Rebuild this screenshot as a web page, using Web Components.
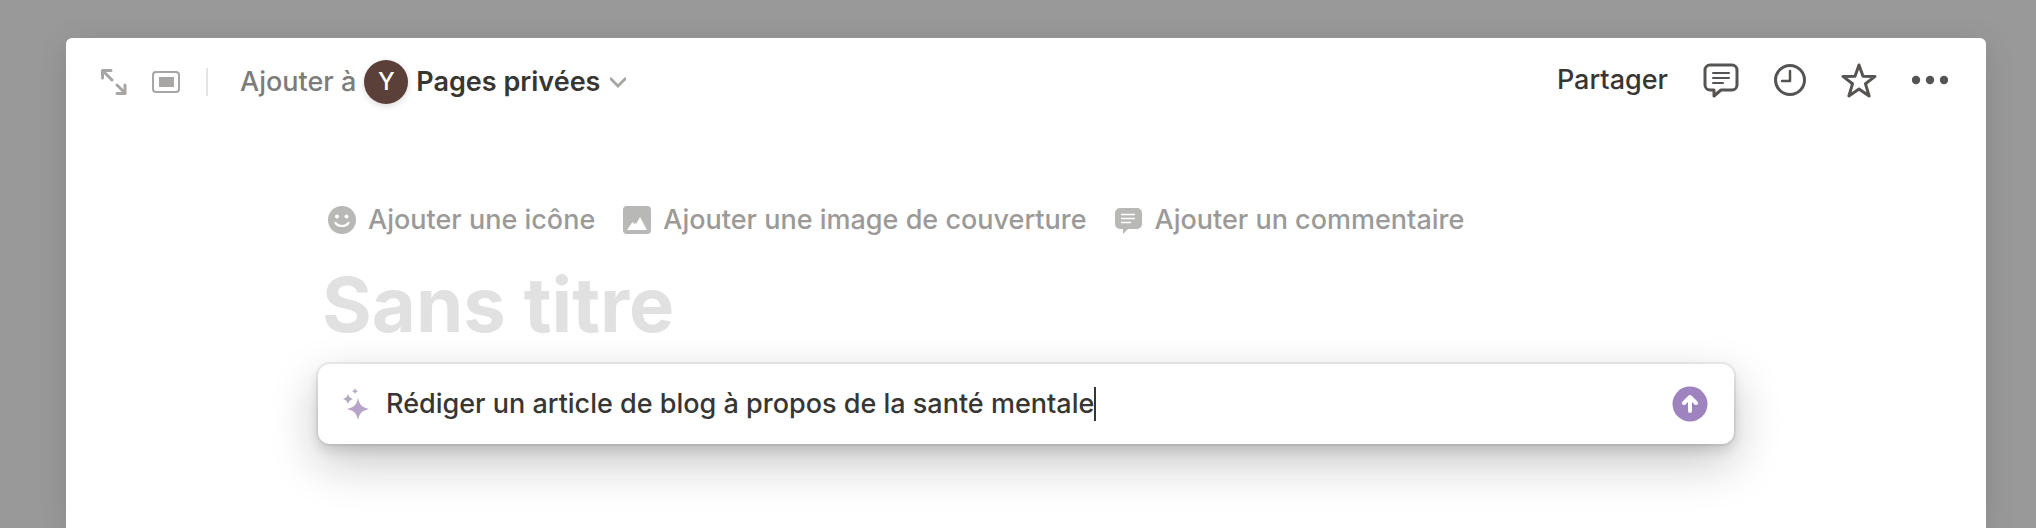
<!DOCTYPE html>
<html lang="fr">
<head>
<meta charset="utf-8">
<meta name="viewport" content="width=device-width, initial-scale=1">
<title>Sans titre</title>
<style>
  :root {
    --fg: #373633;
    --fg-medium: #555452;
    --fg-muted: #7d7c7a;
    --fg-light: #9b9a98;
    --icon-light: #b8b8b6;
    --icon-muted: #a7a6a4;
    --placeholder: #e1e1e1;
    --divider: #e3e3e2;
    --accent: #9f83bf;
    --size-body: 27px;
    --size-title: 76px;
  }
  body {
    margin: 0;
    min-height: 100vh;
    display: flex;
    background: #999;
    font-family: Inter, "Liberation Sans", sans-serif;
    font-size: var(--size-body);
    font-weight: 450;
    line-height: 36px;
    color: var(--fg);
  }
</style>
</head>
<body>
<page-peek>
  <peek-toolbar slot="toolbar">
    <icon-button name="expand" label="Ouvrir en pleine page"></icon-button>
    <icon-button name="peek" label="Changer de vue"></icon-button>
    <page-location slot="location" initial="Y" label="Ajouter à">Pages privées</page-location>
    <icon-button slot="actions" name="comment" label="Commentaires"></icon-button>
    <icon-button slot="actions" name="clock" label="Historique"></icon-button>
    <icon-button slot="actions" name="star" label="Favoris"></icon-button>
    <icon-button slot="actions" name="dots" label="Plus"></icon-button>
  </peek-toolbar>
  <page-heading>
    <quick-action name="smiley">Ajouter une icône</quick-action>
    <quick-action name="image">Ajouter une image de couverture</quick-action>
    <quick-action name="bubble">Ajouter un commentaire</quick-action>
  </page-heading>
  <ai-prompt value="Rédiger un article de blog à propos de la santé mentale"></ai-prompt>
</page-peek>

<script>
// name: [width, height, svg content]
const ICONS = {
  expand: [28, 28, `<g fill="none" stroke="currentColor" stroke-width="3" stroke-linecap="round" stroke-linejoin="round"><path d="M12 12 2.500 2.500M2.500 10V2.500H11M17 17l8 8M25 17v8.500H17"/></g>`],
  peek: [28, 28, `<rect x="1" y="4" width="26" height="20" rx="3" fill="none" stroke="currentColor" stroke-width="2"/><path fill="currentColor" d="M7 9h15v10H7z"/>`],
  comment: [36, 36, `<g fill="none" stroke="currentColor" stroke-linecap="round" stroke-linejoin="round"><path stroke-width="3" d="M7 3h22a5 5 0 0 1 5 5v15a5 5 0 0 1-5 5H18l-7 6v-6H7a5 5 0 0 1-5-5V8a5 5 0 0 1 5-5z"/><path stroke-width="2" d="M10 11h16M10 16h16M10 21h10"/></g>`],
  clock: [32, 32, `<circle cx="16" cy="16" r="14.500" fill="none" stroke="currentColor" stroke-width="3"/><path d="M16 7v10H8" fill="none" stroke="currentColor" stroke-width="2.500" stroke-linecap="round" stroke-linejoin="round"/>`],
  star: [36, 36, `<path d="M18 3l4 11.200 12 .2-9.500 7.400 3.600 12.200L18 27 7.900 34l3.600-12.200L2 14.400l12-.2z" fill="none" stroke="currentColor" stroke-width="3" stroke-linejoin="round"/>`],
  dots: [36, 36, `<g fill="currentColor"><circle cx="4" cy="18" r="4.200"/><circle cx="18" cy="18" r="4.200"/><circle cx="32" cy="18" r="4.200"/></g>`],
  chevron: [16, 16, `<path d="M0 4l8 8 8-8" fill="none" stroke="currentColor" stroke-width="2.800"/>`],
  smiley: [28, 28, `<circle cx="14" cy="14" r="14" fill="currentColor"/><g fill="#fff"><circle cx="9" cy="10.500" r="2"/><circle cx="18.500" cy="10.500" r="2"/></g><path d="M7.500 17c2.800 4 10.200 4 13 0" fill="none" stroke="#fff" stroke-width="2.200" stroke-linecap="round"/>`],
  image: [28, 28, `<rect width="28" height="28" rx="4" fill="currentColor"/><path d="M4 24l5.500-8 2 2 .8-1 1 .8L17 11l7 13z" fill="#fff"/>`],
  bubble: [28, 28, `<path d="M5 2h17a5 5 0 0 1 5 5v11a5 5 0 0 1-5 5H13l-5 5v-5H5a5 5 0 0 1-5-5V7a5 5 0 0 1 5-5z" fill="currentColor"/><path d="M6 8.500h14M6 12.500h14M6 16.500h10" stroke="#fff" stroke-width="1.600" fill="none"/>`],
  sparkle: [28, 32, `<path fill="#b7a4c8" d="M16 10c1.600 7 4 9.400 11 11-7 1.600-9.400 4-11 11-1.600-7-4-9.400-11-11 7-1.600 9.400-4 11-11z"/><g fill="#b5a9be"><path d="M6 5.500c.8 3.500 2 4.700 5.500 5.500-3.500.8-4.700 2-5.500 5.500C5.200 13 4 11.800.5 11 4 10.200 5.200 9 6 5.500z"/><path d="M13 0c.5 1.900 1.200 2.700 3.200 3.200-2 .4-2.700 1.100-3.200 3-.5-1.900-1.200-2.600-3.200-3C11.800 2.700 12.500 1.900 13 0z"/></g>`],
  send: [36, 36, `<circle cx="18" cy="18" r="17.500" fill="currentColor"/><path d="M18 25V12M12 17l6-6 6 6" fill="none" stroke="#fff" stroke-width="4" stroke-linecap="round" stroke-linejoin="round"/>`]
};

function icon(name) {
  const [w, h, body] = ICONS[name];
  return `<svg width="${w}" height="${h}" viewBox="0 0 ${w} ${h}" aria-hidden="true">${body}</svg>`;
}

const BASE = `
  * { box-sizing: border-box; }
  svg { display: block; flex: none; }
  button { display: flex; align-items: center; margin: 0; padding: 0; border: 0; background: none; font: inherit; color: inherit; white-space: nowrap; cursor: pointer; }
`;

class IconButton extends HTMLElement {
  constructor() {
    super();
    this.attachShadow({ mode: 'open' });
  }
  connectedCallback() {
    this.shadowRoot.innerHTML = `
      <style>${BASE} :host { display: block; }</style>
      <button type="button" aria-label="${this.getAttribute('label')}">${icon(this.getAttribute('name'))}</button>
    `;
  }
}
customElements.define('icon-button', IconButton);

class PageLocation extends HTMLElement {
  constructor() {
    super();
    this.attachShadow({ mode: 'open' });
  }
  connectedCallback() {
    this.shadowRoot.innerHTML = `
      <style>
        ${BASE}
        :host { display: flex; align-items: center; gap: 8px; white-space: nowrap; }
        .label { color: var(--fg-muted); }
        button { gap: 8px; }
        .avatar { display: grid; place-items: center; width: 44px; height: 44px; border-radius: 50%; background: #5a4038; color: #fff; font-size: 24px; box-shadow: 0 2px 6px rgba(0, 0, 0, .15); }
        .name { padding-right: 2px; font-weight: 600; }
        svg { color: var(--icon-muted); }
      </style>
      <span class="label">${this.getAttribute('label')}</span>
      <button type="button">
        <span class="avatar">${this.getAttribute('initial')}</span>
        <span class="name"><slot></slot></span>
        ${icon('chevron')}
      </button>
    `;
  }
}
customElements.define('page-location', PageLocation);

class PeekToolbar extends HTMLElement {
  constructor() {
    super();
    this.attachShadow({ mode: 'open' });
    this.shadowRoot.innerHTML = `
      <style>
        ${BASE}
        :host { display: block; }
        header { display: flex; align-items: center; justify-content: space-between; padding: 22px 38px 20px 34px; }
        .start { display: flex; align-items: center; }
        .views { display: flex; gap: 24px; padding-right: 26px; border-right: 2px solid var(--divider); color: var(--icon-muted); }
        .location { padding-left: 32px; }
        .end { display: flex; align-items: center; gap: 35px; padding-bottom: 4px; color: var(--fg-medium); }
        .share { color: var(--fg); }
      </style>
      <header>
        <div class="start">
          <div class="views"><slot></slot></div>
          <div class="location"><slot name="location"></slot></div>
        </div>
        <div class="end">
          <button type="button" class="share">Partager</button>
          <slot name="actions"></slot>
        </div>
      </header>
    `;
  }
}
customElements.define('peek-toolbar', PeekToolbar);

class QuickAction extends HTMLElement {
  constructor() {
    super();
    this.attachShadow({ mode: 'open' });
  }
  connectedCallback() {
    this.shadowRoot.innerHTML = `
      <style>
        ${BASE}
        :host { display: block; color: var(--fg-light); }
        button { gap: 12px; }
        svg { color: var(--icon-light); }
      </style>
      <button type="button">${icon(this.getAttribute('name'))}<span><slot></slot></span></button>
    `;
  }
}
customElements.define('quick-action', QuickAction);

class PageHeading extends HTMLElement {
  constructor() {
    super();
    this.attachShadow({ mode: 'open' });
    this.shadowRoot.innerHTML = `
      <style>
        ${BASE}
        :host { display: block; }
        .actions { display: flex; flex-wrap: wrap; gap: 28px; padding: 0 10px; }
        input {
          display: block; width: 100%; height: 96px; margin: 18px 0 12px; padding: 0 4px;
          border: 0; outline: 0; background: none; font: inherit; font-size: var(--size-title); font-weight: 700; color: var(--fg);
        }
        input::placeholder { color: var(--placeholder); opacity: 1; }
      </style>
      <div class="actions"><slot></slot></div>
      <input type="text" aria-label="Titre de la page" placeholder="Sans titre">
    `;
  }
}
customElements.define('page-heading', PageHeading);

class AiPrompt extends HTMLElement {
  constructor() {
    super();
    this.attachShadow({ mode: 'open' });
  }
  connectedCallback() {
    this.shadowRoot.innerHTML = `
      <style>
        ${BASE}
        :host { display: block; }
        form {
          display: flex; align-items: center; min-height: 80px; padding: 0 26px 0 24px; border-radius: 12px; background: #fff;
          box-shadow: 0 0 0 2px rgba(15, 15, 15, .06), 0 6px 12px rgba(15, 15, 15, .12), 0 18px 48px rgba(15, 15, 15, .24);
        }
        label { display: flex; align-items: center; flex: 1; min-width: 0; }
        input {
          field-sizing: content; min-width: 0; margin: 0 0 0 16px; padding: 0; border: 0; outline: 0;
          background: none; font: inherit; color: inherit; caret-color: transparent;
        }
        .caret { width: 2px; height: 34px; background: var(--fg); }
        button { color: var(--accent); }
      </style>
      <form>
        <label>
          ${icon('sparkle')}
          <input type="text" aria-label="Demander à l’IA">
          <span class="caret"></span>
        </label>
        <button type="submit" aria-label="Envoyer">${icon('send')}</button>
      </form>
    `;
    this.shadowRoot.querySelector('input').value = this.getAttribute('value');
    this.shadowRoot.querySelector('form').addEventListener('submit', (e) => e.preventDefault());
  }
}
customElements.define('ai-prompt', AiPrompt);

class PagePeek extends HTMLElement {
  constructor() {
    super();
    this.attachShadow({ mode: 'open' });
    this.shadowRoot.innerHTML = `
      <style>
        :host { display: flex; flex: 1; min-width: 0; padding: 38px 50px 0 66px; }
        main { flex: 1; min-width: 0; border-radius: 6px 6px 0 0; background: #fff; box-shadow: 0 6px 32px rgba(0, 0, 0, .12); }
        .content { width: 100%; max-width: 1416px; margin: 0 auto; padding-top: 78px; }
      </style>
      <main>
        <slot name="toolbar"></slot>
        <div class="content"><slot></slot></div>
      </main>
    `;
  }
}
customElements.define('page-peek', PagePeek);
</script>
</body>
</html>
